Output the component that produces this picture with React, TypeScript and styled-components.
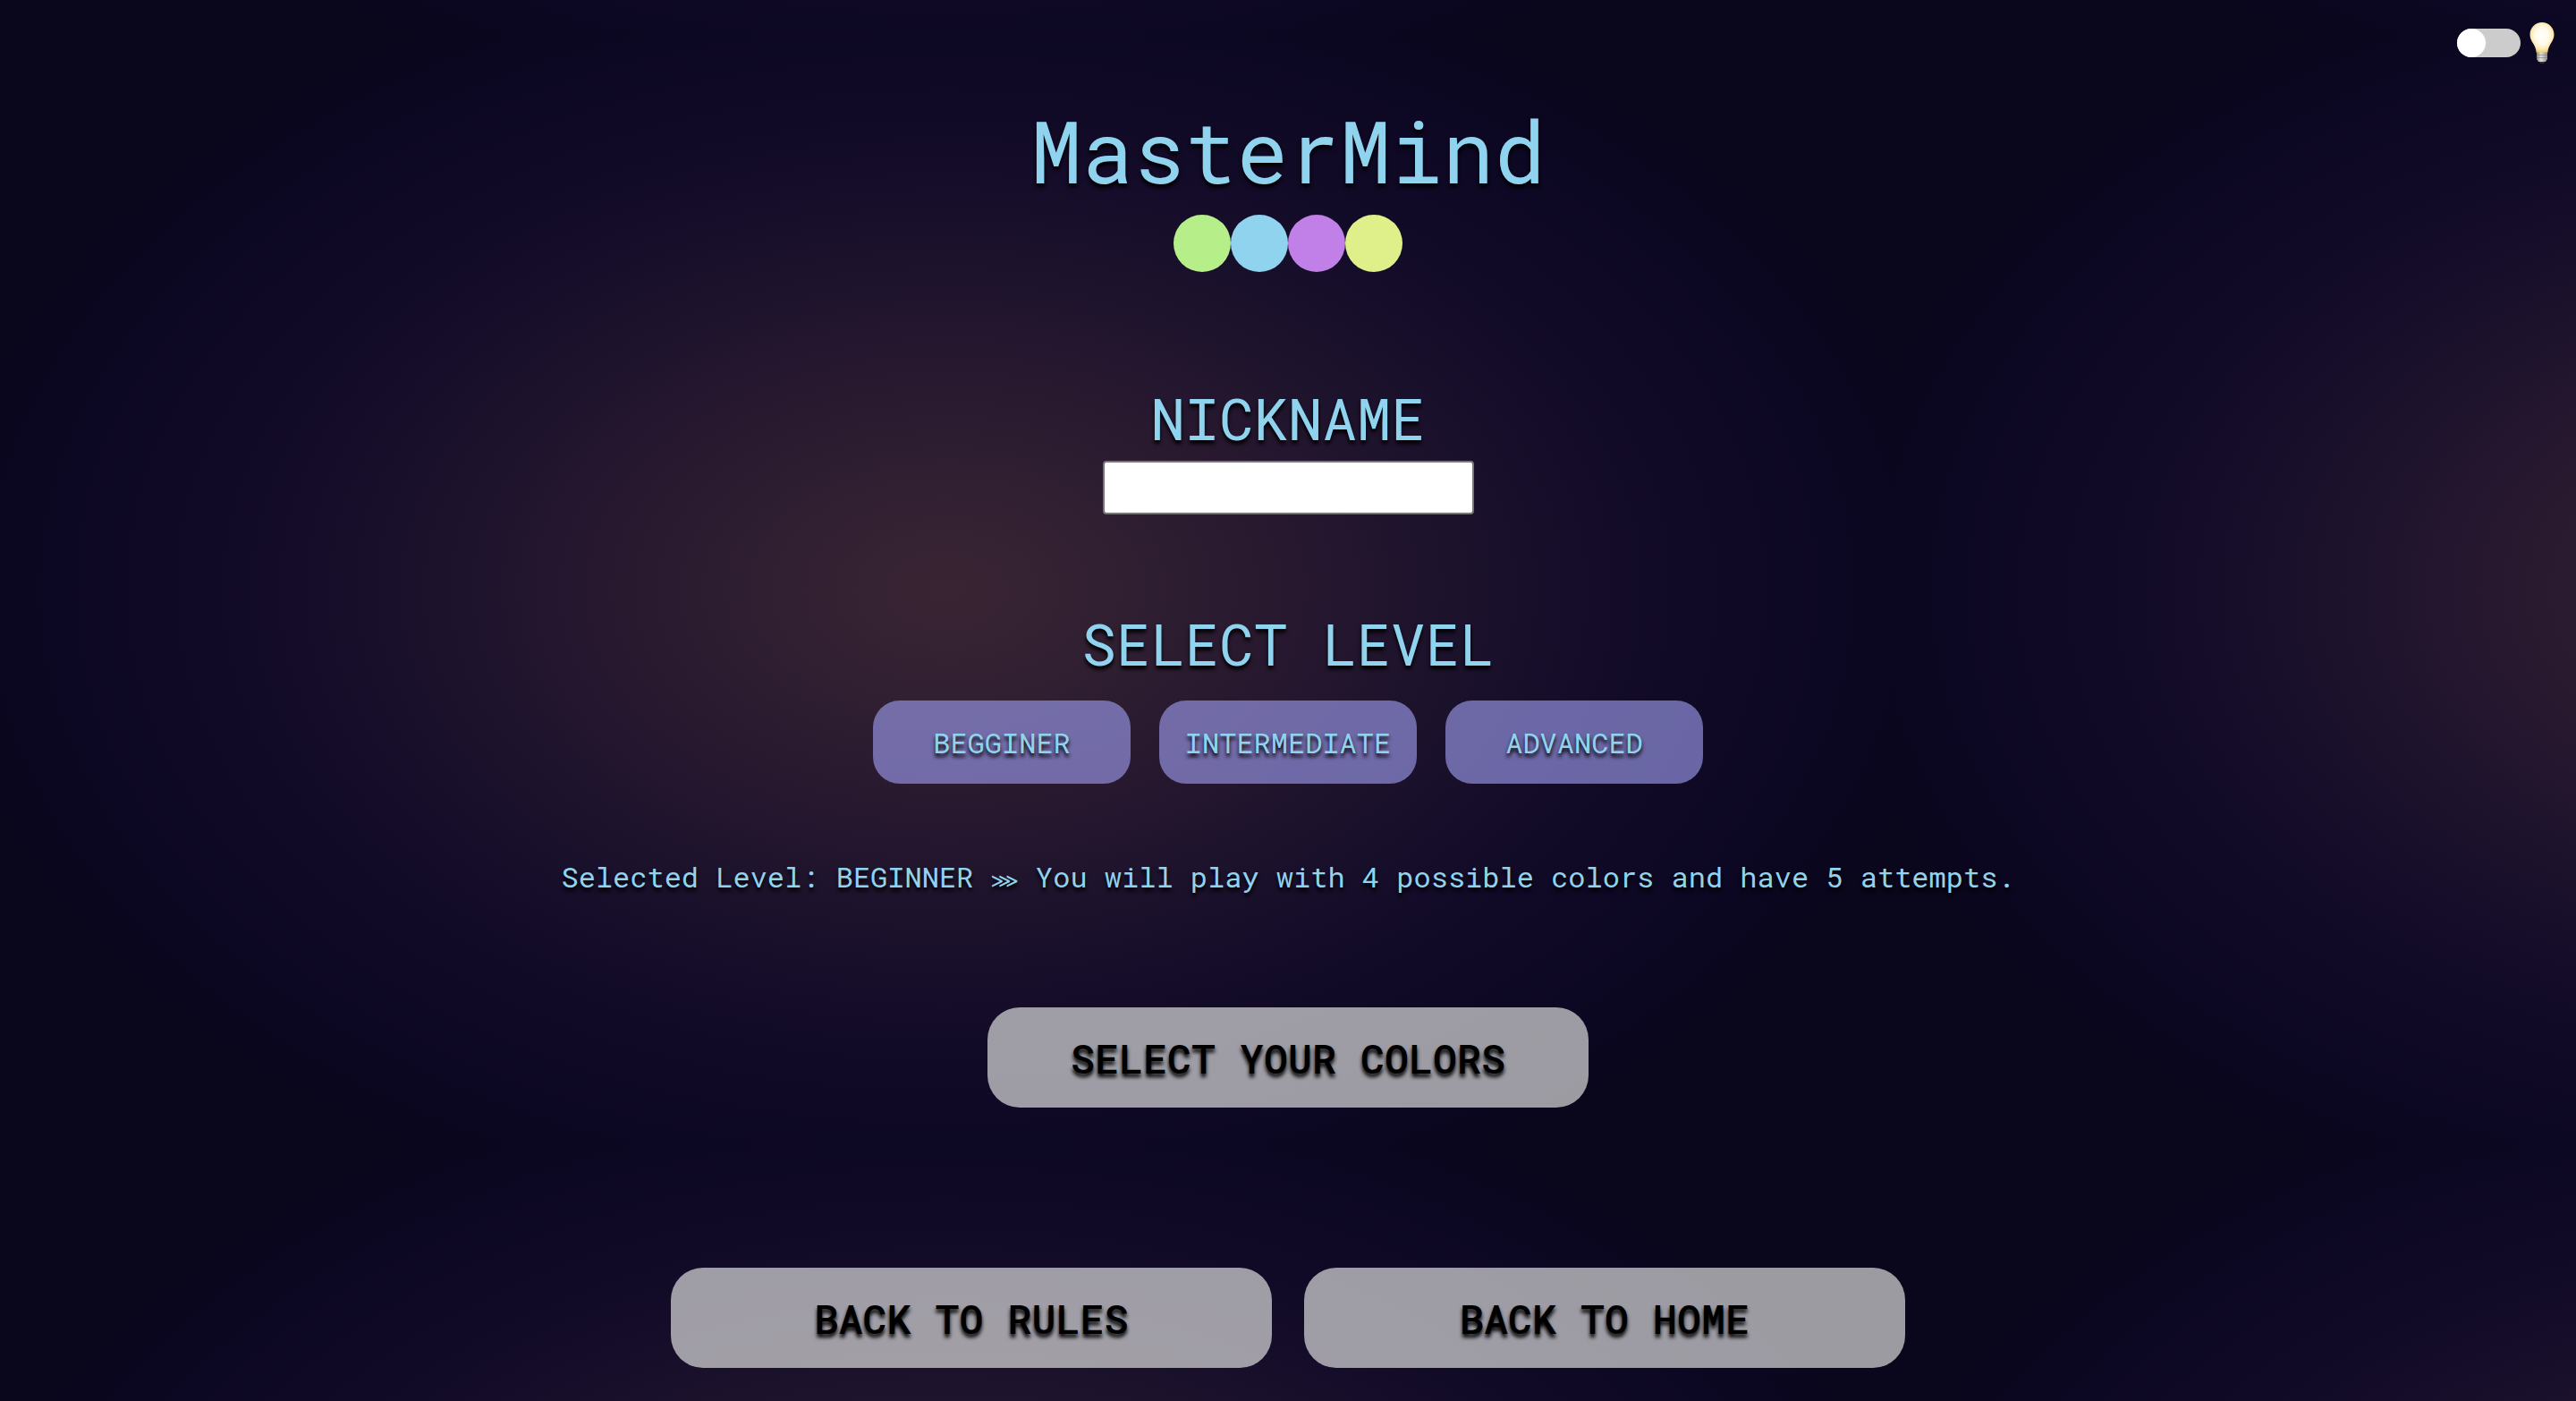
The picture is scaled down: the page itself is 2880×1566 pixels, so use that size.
import { useState } from "react";
import styled, { createGlobalStyle } from "styled-components";

const GlobalStyle = createGlobalStyle`
  * {
    box-sizing: border-box;
  }

  body {
    margin: 0;
    background: #0a061b;
    color: #90d3ef;
    font-family: "Roboto Mono", "DejaVu Sans Mono", monospace;
    font-weight: 450;
  }
`;

const Page = styled.div`
  display: flex;
  flex-direction: column;
  min-height: 100vh;
  background-color: #0a061b;
  background-image: radial-gradient(
    ellipse 1140px 740px at center,
    #392433 0%,
    #312032 16%,
    #27182f 34%,
    #1c122c 50%,
    #140c29 64%,
    #0f0926 78%,
    #0c0722 88%,
    #0a061c 100%
  );
  background-size: 2116px 1240px;
  background-position: 0 40px;
`;

const TopBar = styled.header`
  display: flex;
  justify-content: flex-end;
  align-items: center;
  gap: 10px;
  padding: 24px 24px 0;
`;

const Toggle = styled.input`
  appearance: none;
  display: flex;
  width: 71px;
  height: 32px;
  margin: 0;
  border-radius: 16px;
  background: #ccc;
  cursor: pointer;

  &::before {
    content: "";
    width: 32px;
    height: 32px;
    border-radius: 50%;
    background: #fff;
  }

  &:checked {
    justify-content: flex-end;
  }
`;

const BulbLabel = styled.label`
  display: flex;
`;

const Main = styled.main`
  flex: 1;
  display: flex;
  flex-direction: column;
  align-items: center;
  padding: 40px 0 37px;
  text-shadow: 0 4px 4px #000;
`;

const Title = styled.h1`
  margin: 0 0 16px;
  font-size: 96px;
  font-weight: inherit;
  line-height: 112px;
`;

const Pegs = styled.div`
  display: flex;
  margin-bottom: 125px;
`;

const Peg = styled.span<{ $color: string }>`
  width: 64px;
  height: 64px;
  border-radius: 50%;
  background: ${(p) => p.$color};
`;

const Field = styled.div`
  display: flex;
  flex-direction: column;
  align-items: center;
  gap: 10px;
  margin-bottom: 106px;
`;

const FieldLabel = styled.label`
  font-size: 64px;
  line-height: 76px;
`;

const NameInput = styled.input`
  width: 415px;
  height: 60px;
  padding: 2px 4px;
  border: 2px solid #767676;
  border-radius: 4px;
  background: #fff;
  font: 32px "Roboto Mono", "DejaVu Sans Mono", monospace;
`;

const SectionTitle = styled.h2`
  margin: 0 0 26px;
  font-size: 64px;
  font-weight: inherit;
  line-height: 76px;
`;

const Levels = styled.div`
  display: flex;
  gap: 32px;
  margin-bottom: 84px;
`;

const LevelButton = styled.button`
  width: 288px;
  height: 93px;
  padding: 0;
  border: 0;
  border-radius: 30px;
  background: rgba(145, 142, 220, 0.7);
  color: inherit;
  font: inherit;
  font-size: 32px;
  text-shadow: inherit;
  cursor: pointer;
`;

const Summary = styled.p`
  margin: 0 0 126px;
  font-size: 32px;
  line-height: 40px;
`;

const Arrows = styled.span`
  font-family: "DejaVu Sans", sans-serif;
  font-size: 22px;
  line-height: 1;
`;

const ActionButton = styled.button`
  width: 672px;
  height: 112px;
  padding: 0;
  border: 0;
  border-radius: 36px;
  background: rgba(220, 220, 220, 0.7);
  color: #000;
  font: inherit;
  font-size: 45px;
  font-weight: 550;
  text-shadow: inherit;
  cursor: pointer;
`;

const Footer = styled.nav`
  display: flex;
  gap: 36px;
  margin-top: auto;
`;

const PEG_COLORS = ["#b6ef8a", "#90d3ef", "#c080e8", "#dff08a"];

const LEVELS = [
  { label: "BEGGINER", name: "BEGINNER", colors: 4, attempts: 5 },
  { label: "INTERMEDIATE", name: "INTERMEDIATE", colors: 6, attempts: 7 },
  { label: "ADVANCED", name: "ADVANCED", colors: 8, attempts: 10 },
];

function Bulb() {
  return (
    <svg width="28" height="48" viewBox="0 0 28 48" role="img" aria-label="Light">
      <defs>
        <radialGradient id="glass" cx="50%" cy="45%" r="58%">
          <stop offset="0" stopColor="#fffffb" />
          <stop offset="0.5" stopColor="#fffaea" />
          <stop offset="0.78" stopColor="#fbe9b4" />
          <stop offset="1" stopColor="#f0c553" />
        </radialGradient>
        <linearGradient id="cap" x1="0" x2="1">
          <stop offset="0" stopColor="#8c8b88" />
          <stop offset="0.4" stopColor="#e0dfdc" />
          <stop offset="1" stopColor="#8f8e8a" />
        </linearGradient>
      </defs>
      <path d="M10 43h8l-2 4h-4z" fill="#333" />
      <path d="M8 34h12v8l-2 3h-8l-2-3z" fill="url(#cap)" />
      <path d="M8 37.500h12M8 40.500h12" stroke="#77756f" strokeWidth="1" opacity="0.5" />
      <path d="M14 1C6.500 1 0.500 7 0.500 14.500c0 5 2.500 8 4.500 11.500 1.500 3 2.500 5.500 2.500 8.500h13c0-3 1-5.500 2.500-8.500 2-3.500 4.500-6.500 4.500-11.500C27.500 7 21.500 1 14 1z" fill="url(#glass)" />
    </svg>
  );
}

export default function App() {
  const [level, setLevel] = useState(LEVELS[0]);

  return (
    <Page>
      <GlobalStyle />
      <TopBar>
        <Toggle type="checkbox" id="theme" />
        <BulbLabel htmlFor="theme">
          <Bulb />
        </BulbLabel>
      </TopBar>
      <Main>
        <Title>MasterMind</Title>
        <Pegs>
          {PEG_COLORS.map((color) => (
            <Peg key={color} $color={color} />
          ))}
        </Pegs>
        <Field>
          <FieldLabel htmlFor="nickname">NICKNAME</FieldLabel>
          <NameInput id="nickname" type="text" />
        </Field>
        <SectionTitle>SELECT LEVEL</SectionTitle>
        <Levels>
          {LEVELS.map((item) => (
            <LevelButton key={item.name} type="button" onClick={() => setLevel(item)}>
              {item.label}
            </LevelButton>
          ))}
        </Levels>
        <Summary>
          Selected Level: {level.name} <Arrows>⋙</Arrows> You will play with {level.colors} possible colors and have{" "}
          {level.attempts} attempts.
        </Summary>
        <ActionButton type="button">SELECT YOUR COLORS</ActionButton>
        <Footer>
          <ActionButton type="button">BACK TO RULES</ActionButton>
          <ActionButton type="button">BACK TO HOME</ActionButton>
        </Footer>
      </Main>
    </Page>
  );
}
